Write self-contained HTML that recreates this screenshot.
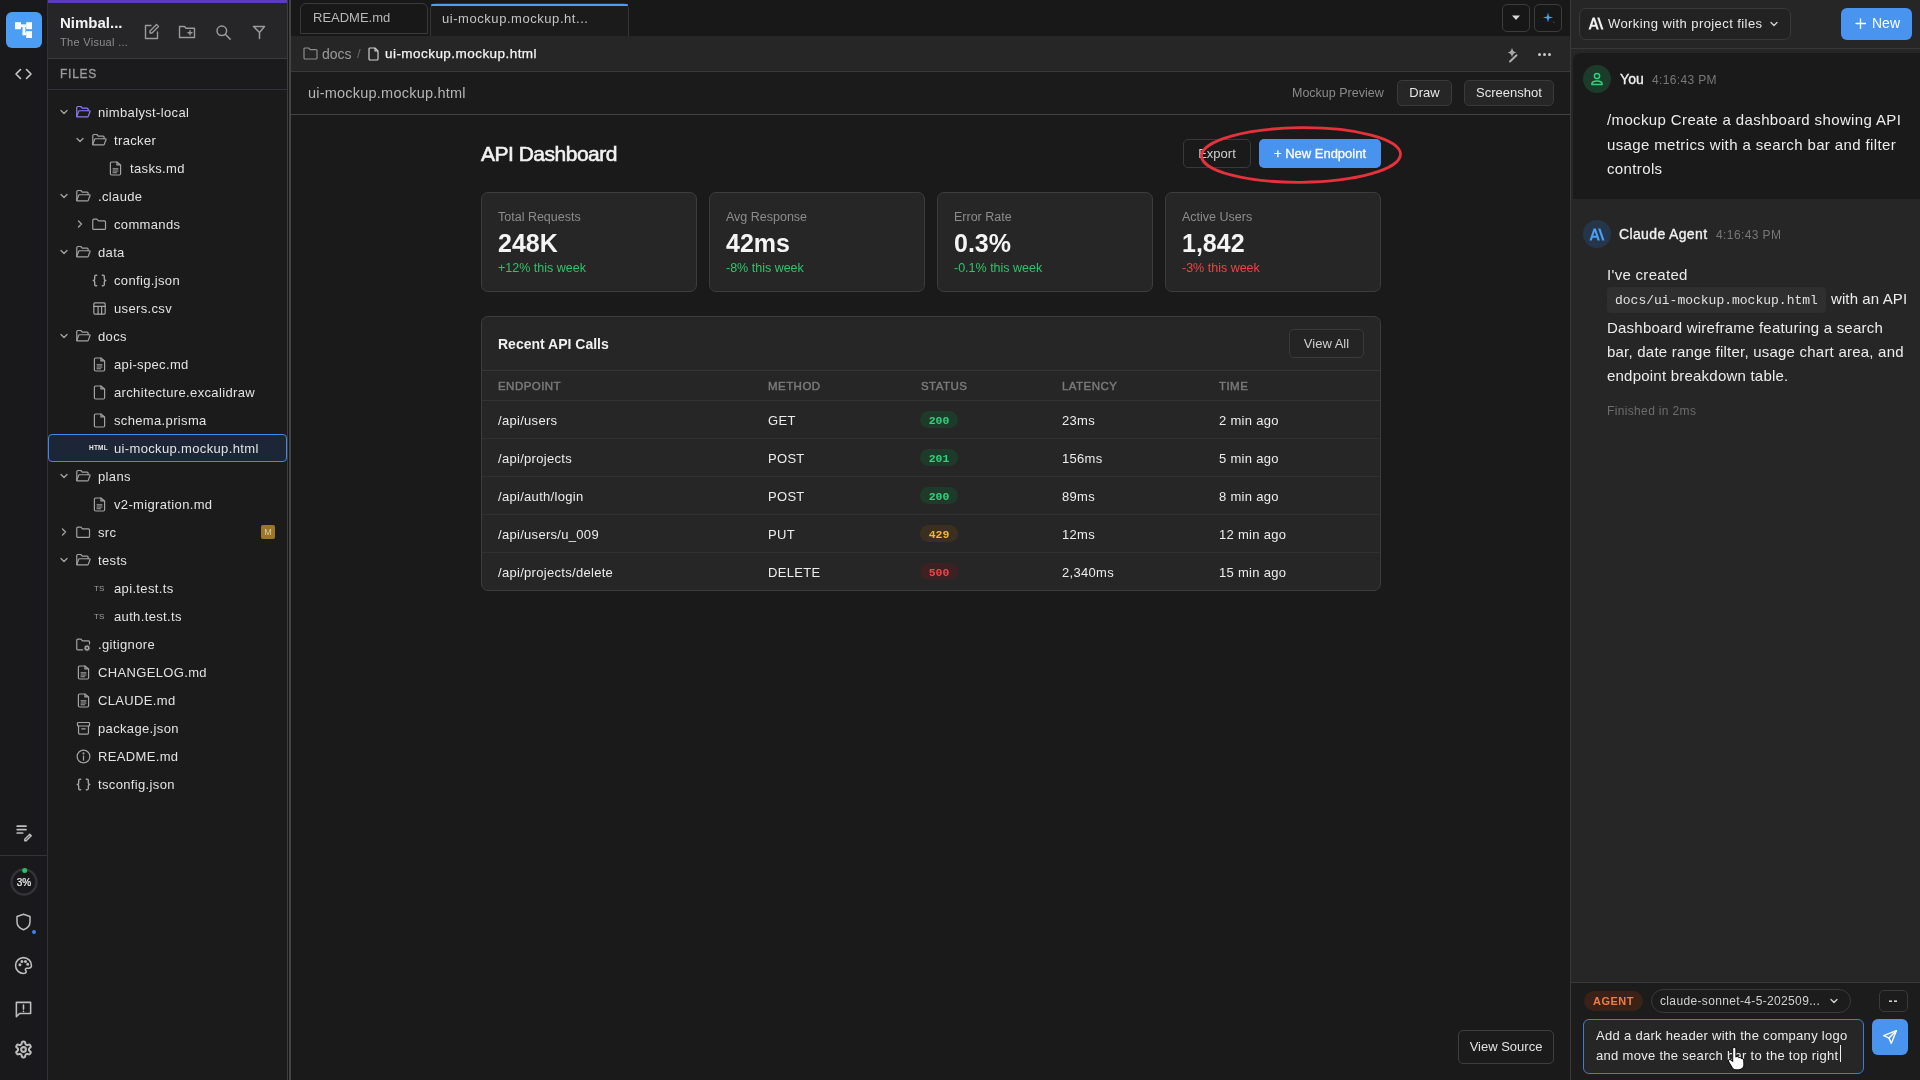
<!DOCTYPE html>
<html><head><meta charset="utf-8">
<style>
*{box-sizing:border-box;margin:0;padding:0}
html,body{width:1920px;height:1080px;overflow:hidden;background:#1a1a1a;font-family:"Liberation Sans",sans-serif;color:#e6e6e6}
.a{position:absolute}
body{will-change:transform}
svg{display:block}
#rail{left:0;top:0;width:47px;height:1080px;background:#19181a}
#railb{left:47px;top:0;width:1px;height:1080px;background:#333236}
#side{left:48px;top:0;width:239px;height:1080px;background:#1b1b1c}
#sideb{left:287px;top:0;width:1px;height:1080px;background:#3d3d40}
#sidehdr{left:48px;top:0;width:239px;height:59px;background:#262528;border-bottom:1px solid #3a393c}
#purp{left:48px;top:0;width:239px;height:3px;background:#5b3bc2}
#files{left:48px;top:59px;width:239px;height:31px;background:#1b1a1d;border-bottom:1px solid #333236}
.ftxt{font-size:13px;line-height:28px;color:#e2e2e2;white-space:nowrap;letter-spacing:0.35px}
.sel{background:#1d2636;border:1.5px solid #3d8be8;border-radius:4px}
.mbadge{width:14px;height:14px;background:#9c7628;color:#d8cba8;font-size:9px;line-height:14px;text-align:center;border-radius:2px}
#gap{left:288px;top:0;width:1px;height:1080px;background:#171717}
#gapl{left:289px;top:0;width:2px;height:1080px;background:#444446}
#main{left:291px;top:0;width:1279px;height:1080px;background:#1a1a1a}
#mainb{left:1570px;top:0;width:1px;height:1080px;background:#3a3a3a}
#right{left:1571px;top:0;width:349px;height:1080px;background:#262626}
.btn{background:#262626;border:1px solid #3a3a3a;border-radius:5px;color:#e6e6e6;text-align:center}
.card{background:#262626;border:1px solid #3c3c3c;border-radius:7px}
.tc{font-size:13px;color:#ececec;letter-spacing:0.3px}
.msg{font-size:15px;line-height:24.5px;color:#ececec;letter-spacing:0.3px}
</style></head><body>
<div class="a" id="rail"></div>
<div class="a" id="railb"></div>
<div class="a" id="side"></div><div class="a" id="sideb"></div>
<div class="a" id="sidehdr"></div>
<div class="a" id="purp"></div>
<div class="a" id="files"></div>
<div class="a" style="left:60px;top:14px;font-size:15px;font-weight:bold;color:#f2f2f2">Nimbal...</div>
<div class="a" style="left:60px;top:36px;font-size:11px;letter-spacing:0.3px;color:#8c8c8c">The Visual ...</div>
<div class="a" style="left:60px;top:67px;font-size:12px;-webkit-text-stroke:0.35px #9a9a9a;letter-spacing:0.75px;color:#9a9a9a">FILES</div>
<div class="a" style="left:6px;top:12px;width:36px;height:36px;background:#4b9ef4;border-radius:6px"></div>
<svg class="a" style="left:0;top:0" width="47" height="50" viewBox="0 0 47 50"><rect x="15" y="22.2" width="6" height="7" fill="#fff"/><rect x="26.2" y="22.2" width="5.8" height="7" fill="#fff"/><rect x="26.2" y="31.2" width="5.8" height="6.8" fill="#fff"/><rect x="21" y="24.4" width="5.2" height="2.7" fill="#fff"/><rect x="22.6" y="27" width="2.8" height="8.2" fill="#fff"/><rect x="22.6" y="32.6" width="3.6" height="2.6" fill="#fff"/></svg>
<svg class="a" style="left:0;top:60px" width="47" height="25" viewBox="0 60 47 25" fill="none" stroke="#c8c8c8" stroke-width="1.6" stroke-linecap="round" stroke-linejoin="round"><path d="M20.5 69.5 16 74l4.5 4.5M26.5 69.5 31 74l-4.5 4.5"/></svg>
<svg class="a" style="left:15px;top:824px" width="18" height="18" viewBox="0 0 18 18" fill="none" stroke="#bdbdbd" stroke-width="1.7" stroke-linecap="round"><path d="M2.2 2.2h8.8M2.2 5.6h8.8M2.2 9h5.5"/><path d="M9.8 15.3l5-5 1.4 1.4-5 5H9.8z" stroke-width="1.5" stroke-linejoin="round"/></svg>
<div class="a" style="left:0;top:855px;width:47px;height:1px;background:#343336"></div>
<svg class="a" style="left:9px;top:867px" width="30" height="30" viewBox="0 0 30 30"><circle cx="15" cy="15" r="12.5" fill="none" stroke="#333236" stroke-width="2.5"/><circle cx="15.7" cy="3.4" r="2.5" fill="#22c55e"/></svg>
<div class="a" style="left:9px;top:877px;width:30px;text-align:center;font-size:10px;color:#f0f0f0;-webkit-text-stroke:0.2px #f0f0f0">3%</div>
<svg class="a" style="left:15px;top:913px" width="17" height="18" viewBox="0 0 17 18" fill="none" stroke="#bdbdbd" stroke-width="1.5" stroke-linejoin="round"><path d="M8.5 1.2 2 3.5v5.3c0 4 2.9 6.8 6.5 8 3.6-1.2 6.5-4 6.5-8V3.5z"/></svg>
<div class="a" style="left:32px;top:930px;width:4px;height:4px;border-radius:50%;background:#3b82f6"></div>
<svg class="a" style="left:14px;top:956px" width="19" height="19" viewBox="0 0 24 24" fill="none" stroke="#bdbdbd" stroke-width="2" stroke-linecap="round" stroke-linejoin="round"><path d="M12 22a10 10 0 1 1 10-10c0 2.2-1.8 3.4-3.6 3.4h-2.2a1.8 1.8 0 0 0-1.4 3c.4.5.6 1 .6 1.5 0 1.2-1.2 2.1-3.4 2.1z"/><circle cx="7.5" cy="11" r=".9" fill="#bdbdbd"/><circle cx="10" cy="6.8" r=".9" fill="#bdbdbd"/><circle cx="14.5" cy="6.8" r=".9" fill="#bdbdbd"/><circle cx="17.3" cy="10.5" r=".9" fill="#bdbdbd"/></svg>
<svg class="a" style="left:14px;top:1000px" width="19" height="19" viewBox="0 0 24 24" fill="none" stroke="#bdbdbd" stroke-width="2" stroke-linecap="round" stroke-linejoin="round"><path d="M3 3h18v14H7l-4 4z"/><path d="M12 6.5v5M12 14.2v.3"/></svg>
<svg class="a" style="left:14px;top:1040px" width="19" height="19" viewBox="0 0 24 24" fill="none" stroke="#bdbdbd" stroke-width="2.6" stroke-linecap="round" stroke-linejoin="round"><path d="M12.22 2h-.44a2 2 0 0 0-2 2v.18a2 2 0 0 1-1 1.73l-.43.25a2 2 0 0 1-2 0l-.15-.08a2 2 0 0 0-2.73.73l-.22.38a2 2 0 0 0 .73 2.73l.15.1a2 2 0 0 1 1 1.72v.51a2 2 0 0 1-1 1.74l-.15.09a2 2 0 0 0-.73 2.73l.22.38a2 2 0 0 0 2.73.73l.15-.08a2 2 0 0 1 2 0l.43.25a2 2 0 0 1 1 1.73V20a2 2 0 0 0 2 2h.44a2 2 0 0 0 2-2v-.18a2 2 0 0 1 1-1.73l.43-.25a2 2 0 0 1 2 0l.15.08a2 2 0 0 0 2.73-.73l.22-.39a2 2 0 0 0-.73-2.73l-.15-.08a2 2 0 0 1-1-1.74v-.5a2 2 0 0 1 1-1.74l.15-.09a2 2 0 0 0 .73-2.73l-.22-.38a2 2 0 0 0-2.73-.73l-.15.08a2 2 0 0 1-2 0l-.43-.25a2 2 0 0 1-1-1.73V4a2 2 0 0 0-2-2z"/><circle cx="12" cy="12" r="3"/></svg>
<svg class="a" style="left:143px;top:23px" width="17" height="17" viewBox="0 0 17 17" fill="none" stroke="#9a9a9a" stroke-width="1.4" stroke-linecap="round" stroke-linejoin="round"><path d="M8 2.5H2.5v13h12V9"/><path d="M13.5 1.5l2 2L9 10H7V8z"/></svg>
<svg class="a" style="left:178px;top:24px" width="18" height="16" viewBox="0 0 18 16" fill="none" stroke="#9a9a9a" stroke-width="1.4" stroke-linejoin="round"><path d="M1.5 2.5h5l1.5 1.7h8.5v9.3h-15z"/><path d="M10 8.8h4M12 6.8v4" stroke-linecap="round"/></svg>
<svg class="a" style="left:215px;top:24px" width="17" height="17" viewBox="0 0 17 17" fill="none" stroke="#9a9a9a" stroke-width="1.5" stroke-linecap="round"><circle cx="6.8" cy="6.8" r="4.8"/><path d="M10.3 10.3l4.8 4.8"/></svg>
<svg class="a" style="left:252px;top:25px" width="14" height="15" viewBox="0 0 14 15" fill="none" stroke="#9a9a9a" stroke-width="1.5" stroke-linecap="round" stroke-linejoin="round"><path d="M1.5 1.5h11L7.5 7.5v6M7 7 1.5 1.5"/></svg>
<svg class="a" style="left:59px;top:107px" width="10" height="10" viewBox="0 0 10 10" fill="none" stroke="#a0a0a0" stroke-width="1.4" stroke-linecap="round" stroke-linejoin="round"><path d="M2 3.5 5 6.5 8 3.5"/></svg><svg class="a" style="left:74.5px;top:104px" width="17" height="17" viewBox="0 0 24 24" fill="none" stroke="#8b7cf6" stroke-width="1.7" stroke-linecap="round" stroke-linejoin="round"><path d="M2.5 17.5V5a1.5 1.5 0 0 1 1.5-1.5h4.2l2 2.2H17a1.5 1.5 0 0 1 1.5 1.5v2.3"/><path d="M2.5 17.5 5.2 10.3A1.2 1.2 0 0 1 6.3 9.5h14.2a.8.8 0 0 1 .75 1.05L18.7 17.5a1.2 1.2 0 0 1-1.1.8H3.3a.8.8 0 0 1-.8-.8z"/></svg><div class="a ftxt" style="left:98px;top:99px">nimbalyst-local</div>
<svg class="a" style="left:75px;top:135px" width="10" height="10" viewBox="0 0 10 10" fill="none" stroke="#a0a0a0" stroke-width="1.4" stroke-linecap="round" stroke-linejoin="round"><path d="M2 3.5 5 6.5 8 3.5"/></svg><svg class="a" style="left:90.5px;top:132px" width="17" height="17" viewBox="0 0 24 24" fill="none" stroke="#a3a3a3" stroke-width="1.7" stroke-linecap="round" stroke-linejoin="round"><path d="M2.5 17.5V5a1.5 1.5 0 0 1 1.5-1.5h4.2l2 2.2H17a1.5 1.5 0 0 1 1.5 1.5v2.3"/><path d="M2.5 17.5 5.2 10.3A1.2 1.2 0 0 1 6.3 9.5h14.2a.8.8 0 0 1 .75 1.05L18.7 17.5a1.2 1.2 0 0 1-1.1.8H3.3a.8.8 0 0 1-.8-.8z"/></svg><div class="a ftxt" style="left:114px;top:127px">tracker</div>
<svg class="a" style="left:106.5px;top:160px" width="17" height="17" viewBox="0 0 24 24" fill="none" stroke="#a3a3a3" stroke-width="1.7" stroke-linecap="round" stroke-linejoin="round"><path d="M14 2.8H6.5A1.7 1.7 0 0 0 4.8 4.5v15a1.7 1.7 0 0 0 1.7 1.7h11a1.7 1.7 0 0 0 1.7-1.7V7z"/><path d="M14 2.8V7h4.2"/><path d="M8.5 12.5h7M8.5 15.5h7M8.5 18h5"/></svg><div class="a ftxt" style="left:130px;top:155px">tasks.md</div>
<svg class="a" style="left:59px;top:191px" width="10" height="10" viewBox="0 0 10 10" fill="none" stroke="#a0a0a0" stroke-width="1.4" stroke-linecap="round" stroke-linejoin="round"><path d="M2 3.5 5 6.5 8 3.5"/></svg><svg class="a" style="left:74.5px;top:188px" width="17" height="17" viewBox="0 0 24 24" fill="none" stroke="#a3a3a3" stroke-width="1.7" stroke-linecap="round" stroke-linejoin="round"><path d="M2.5 17.5V5a1.5 1.5 0 0 1 1.5-1.5h4.2l2 2.2H17a1.5 1.5 0 0 1 1.5 1.5v2.3"/><path d="M2.5 17.5 5.2 10.3A1.2 1.2 0 0 1 6.3 9.5h14.2a.8.8 0 0 1 .75 1.05L18.7 17.5a1.2 1.2 0 0 1-1.1.8H3.3a.8.8 0 0 1-.8-.8z"/></svg><div class="a ftxt" style="left:98px;top:183px">.claude</div>
<svg class="a" style="left:75px;top:219px" width="10" height="10" viewBox="0 0 10 10" fill="none" stroke="#a0a0a0" stroke-width="1.4" stroke-linecap="round" stroke-linejoin="round"><path d="M3.5 2 6.5 5 3.5 8"/></svg><svg class="a" style="left:90.5px;top:216px" width="17" height="17" viewBox="0 0 24 24" fill="none" stroke="#a3a3a3" stroke-width="1.7" stroke-linecap="round" stroke-linejoin="round"><path d="M2.5 6a1.5 1.5 0 0 1 1.5-1.5h4.4l2.2 2.3H19a1.5 1.5 0 0 1 1.5 1.5v9.2a1.5 1.5 0 0 1-1.5 1.5H4a1.5 1.5 0 0 1-1.5-1.5z"/></svg><div class="a ftxt" style="left:114px;top:211px">commands</div>
<svg class="a" style="left:59px;top:247px" width="10" height="10" viewBox="0 0 10 10" fill="none" stroke="#a0a0a0" stroke-width="1.4" stroke-linecap="round" stroke-linejoin="round"><path d="M2 3.5 5 6.5 8 3.5"/></svg><svg class="a" style="left:74.5px;top:244px" width="17" height="17" viewBox="0 0 24 24" fill="none" stroke="#a3a3a3" stroke-width="1.7" stroke-linecap="round" stroke-linejoin="round"><path d="M2.5 17.5V5a1.5 1.5 0 0 1 1.5-1.5h4.2l2 2.2H17a1.5 1.5 0 0 1 1.5 1.5v2.3"/><path d="M2.5 17.5 5.2 10.3A1.2 1.2 0 0 1 6.3 9.5h14.2a.8.8 0 0 1 .75 1.05L18.7 17.5a1.2 1.2 0 0 1-1.1.8H3.3a.8.8 0 0 1-.8-.8z"/></svg><div class="a ftxt" style="left:98px;top:239px">data</div>
<svg class="a" style="left:90.5px;top:272px" width="17" height="17" viewBox="0 0 24 24" fill="none" stroke="#a3a3a3" stroke-width="1.7" stroke-linecap="round" stroke-linejoin="round"><path d="M8 4.5H7A1.8 1.8 0 0 0 5.2 6.3V10A2 2 0 0 1 3.2 12 2 2 0 0 1 5.2 14v3.7A1.8 1.8 0 0 0 7 19.5h1" stroke-width="2"/><path d="M16 4.5h1a1.8 1.8 0 0 1 1.8 1.8V10a2 2 0 0 0 2 2 2 2 0 0 0-2 2v3.7a1.8 1.8 0 0 1-1.8 1.8h-1" stroke-width="2"/></svg><div class="a ftxt" style="left:114px;top:267px">config.json</div>
<svg class="a" style="left:90.5px;top:300px" width="17" height="17" viewBox="0 0 24 24" fill="none" stroke="#a3a3a3" stroke-width="1.7" stroke-linecap="round" stroke-linejoin="round"><rect x="4" y="4" width="16" height="16" rx="1.5"/><path d="M4 9h16M10 9v11M15 9v11"/></svg><div class="a ftxt" style="left:114px;top:295px">users.csv</div>
<svg class="a" style="left:59px;top:331px" width="10" height="10" viewBox="0 0 10 10" fill="none" stroke="#a0a0a0" stroke-width="1.4" stroke-linecap="round" stroke-linejoin="round"><path d="M2 3.5 5 6.5 8 3.5"/></svg><svg class="a" style="left:74.5px;top:328px" width="17" height="17" viewBox="0 0 24 24" fill="none" stroke="#a3a3a3" stroke-width="1.7" stroke-linecap="round" stroke-linejoin="round"><path d="M2.5 17.5V5a1.5 1.5 0 0 1 1.5-1.5h4.2l2 2.2H17a1.5 1.5 0 0 1 1.5 1.5v2.3"/><path d="M2.5 17.5 5.2 10.3A1.2 1.2 0 0 1 6.3 9.5h14.2a.8.8 0 0 1 .75 1.05L18.7 17.5a1.2 1.2 0 0 1-1.1.8H3.3a.8.8 0 0 1-.8-.8z"/></svg><div class="a ftxt" style="left:98px;top:323px">docs</div>
<svg class="a" style="left:90.5px;top:356px" width="17" height="17" viewBox="0 0 24 24" fill="none" stroke="#a3a3a3" stroke-width="1.7" stroke-linecap="round" stroke-linejoin="round"><path d="M14 2.8H6.5A1.7 1.7 0 0 0 4.8 4.5v15a1.7 1.7 0 0 0 1.7 1.7h11a1.7 1.7 0 0 0 1.7-1.7V7z"/><path d="M14 2.8V7h4.2"/><path d="M8.5 12.5h7M8.5 15.5h7M8.5 18h5"/></svg><div class="a ftxt" style="left:114px;top:351px">api-spec.md</div>
<svg class="a" style="left:90.5px;top:384px" width="17" height="17" viewBox="0 0 24 24" fill="none" stroke="#a3a3a3" stroke-width="1.7" stroke-linecap="round" stroke-linejoin="round"><path d="M14 2.8H6.5A1.7 1.7 0 0 0 4.8 4.5v15a1.7 1.7 0 0 0 1.7 1.7h11a1.7 1.7 0 0 0 1.7-1.7V7z"/><path d="M14 2.8V7h4.2"/></svg><div class="a ftxt" style="left:114px;top:379px">architecture.excalidraw</div>
<svg class="a" style="left:90.5px;top:412px" width="17" height="17" viewBox="0 0 24 24" fill="none" stroke="#a3a3a3" stroke-width="1.7" stroke-linecap="round" stroke-linejoin="round"><path d="M14 2.8H6.5A1.7 1.7 0 0 0 4.8 4.5v15a1.7 1.7 0 0 0 1.7 1.7h11a1.7 1.7 0 0 0 1.7-1.7V7z"/><path d="M14 2.8V7h4.2"/></svg><div class="a ftxt" style="left:114px;top:407px">schema.prisma</div>
<div class="a sel" style="left:48px;top:434px;width:239px;height:28px"></div><div class="a ico-txt" style="left:89px;top:444px;font-size:6.5px;font-weight:bold;letter-spacing:0.2px;color:#e8e8e8">HTML</div><div class="a ftxt" style="left:114px;top:435px">ui-mockup.mockup.html</div>
<svg class="a" style="left:59px;top:471px" width="10" height="10" viewBox="0 0 10 10" fill="none" stroke="#a0a0a0" stroke-width="1.4" stroke-linecap="round" stroke-linejoin="round"><path d="M2 3.5 5 6.5 8 3.5"/></svg><svg class="a" style="left:74.5px;top:468px" width="17" height="17" viewBox="0 0 24 24" fill="none" stroke="#a3a3a3" stroke-width="1.7" stroke-linecap="round" stroke-linejoin="round"><path d="M2.5 17.5V5a1.5 1.5 0 0 1 1.5-1.5h4.2l2 2.2H17a1.5 1.5 0 0 1 1.5 1.5v2.3"/><path d="M2.5 17.5 5.2 10.3A1.2 1.2 0 0 1 6.3 9.5h14.2a.8.8 0 0 1 .75 1.05L18.7 17.5a1.2 1.2 0 0 1-1.1.8H3.3a.8.8 0 0 1-.8-.8z"/></svg><div class="a ftxt" style="left:98px;top:463px">plans</div>
<svg class="a" style="left:90.5px;top:496px" width="17" height="17" viewBox="0 0 24 24" fill="none" stroke="#a3a3a3" stroke-width="1.7" stroke-linecap="round" stroke-linejoin="round"><path d="M14 2.8H6.5A1.7 1.7 0 0 0 4.8 4.5v15a1.7 1.7 0 0 0 1.7 1.7h11a1.7 1.7 0 0 0 1.7-1.7V7z"/><path d="M14 2.8V7h4.2"/><path d="M8.5 12.5h7M8.5 15.5h7M8.5 18h5"/></svg><div class="a ftxt" style="left:114px;top:491px">v2-migration.md</div>
<svg class="a" style="left:59px;top:527px" width="10" height="10" viewBox="0 0 10 10" fill="none" stroke="#a0a0a0" stroke-width="1.4" stroke-linecap="round" stroke-linejoin="round"><path d="M3.5 2 6.5 5 3.5 8"/></svg><svg class="a" style="left:74.5px;top:524px" width="17" height="17" viewBox="0 0 24 24" fill="none" stroke="#a3a3a3" stroke-width="1.7" stroke-linecap="round" stroke-linejoin="round"><path d="M2.5 6a1.5 1.5 0 0 1 1.5-1.5h4.4l2.2 2.3H19a1.5 1.5 0 0 1 1.5 1.5v9.2a1.5 1.5 0 0 1-1.5 1.5H4a1.5 1.5 0 0 1-1.5-1.5z"/></svg><div class="a ftxt" style="left:98px;top:519px">src</div><div class="a mbadge" style="left:261px;top:525px">M</div>
<svg class="a" style="left:59px;top:555px" width="10" height="10" viewBox="0 0 10 10" fill="none" stroke="#a0a0a0" stroke-width="1.4" stroke-linecap="round" stroke-linejoin="round"><path d="M2 3.5 5 6.5 8 3.5"/></svg><svg class="a" style="left:74.5px;top:552px" width="17" height="17" viewBox="0 0 24 24" fill="none" stroke="#a3a3a3" stroke-width="1.7" stroke-linecap="round" stroke-linejoin="round"><path d="M2.5 17.5V5a1.5 1.5 0 0 1 1.5-1.5h4.2l2 2.2H17a1.5 1.5 0 0 1 1.5 1.5v2.3"/><path d="M2.5 17.5 5.2 10.3A1.2 1.2 0 0 1 6.3 9.5h14.2a.8.8 0 0 1 .75 1.05L18.7 17.5a1.2 1.2 0 0 1-1.1.8H3.3a.8.8 0 0 1-.8-.8z"/></svg><div class="a ftxt" style="left:98px;top:547px">tests</div>
<div class="a ico-txt" style="left:94px;top:584px;font-size:8px;color:#a0a0a0">TS</div><div class="a ftxt" style="left:114px;top:575px">api.test.ts</div>
<div class="a ico-txt" style="left:94px;top:612px;font-size:8px;color:#a0a0a0">TS</div><div class="a ftxt" style="left:114px;top:603px">auth.test.ts</div>
<svg class="a" style="left:74.5px;top:636px" width="17" height="17" viewBox="0 0 24 24" fill="none" stroke="#a3a3a3" stroke-width="1.7" stroke-linecap="round" stroke-linejoin="round"><path d="M11 19.5H4a1.5 1.5 0 0 1-1.5-1.5V6A1.5 1.5 0 0 1 4 4.5h4.4l2.2 2.3H19a1.5 1.5 0 0 1 1.5 1.5v3"/><circle cx="17" cy="17" r="2.2"/><path d="M17 13.3v1.3M17 19.4v1.3M13.3 17h1.3M19.4 17h1.3M14.4 14.4l.9.9M18.7 18.7l.9.9M14.4 19.6l.9-.9M18.7 15.3l.9-.9"/></svg><div class="a ftxt" style="left:98px;top:631px">.gitignore</div>
<svg class="a" style="left:74.5px;top:664px" width="17" height="17" viewBox="0 0 24 24" fill="none" stroke="#a3a3a3" stroke-width="1.7" stroke-linecap="round" stroke-linejoin="round"><path d="M14 2.8H6.5A1.7 1.7 0 0 0 4.8 4.5v15a1.7 1.7 0 0 0 1.7 1.7h11a1.7 1.7 0 0 0 1.7-1.7V7z"/><path d="M14 2.8V7h4.2"/><path d="M8.5 12.5h7M8.5 15.5h7M8.5 18h5"/></svg><div class="a ftxt" style="left:98px;top:659px">CHANGELOG.md</div>
<svg class="a" style="left:74.5px;top:692px" width="17" height="17" viewBox="0 0 24 24" fill="none" stroke="#a3a3a3" stroke-width="1.7" stroke-linecap="round" stroke-linejoin="round"><path d="M14 2.8H6.5A1.7 1.7 0 0 0 4.8 4.5v15a1.7 1.7 0 0 0 1.7 1.7h11a1.7 1.7 0 0 0 1.7-1.7V7z"/><path d="M14 2.8V7h4.2"/><path d="M8.5 12.5h7M8.5 15.5h7M8.5 18h5"/></svg><div class="a ftxt" style="left:98px;top:687px">CLAUDE.md</div>
<svg class="a" style="left:74.5px;top:720px" width="17" height="17" viewBox="0 0 24 24" fill="none" stroke="#a3a3a3" stroke-width="1.7" stroke-linecap="round" stroke-linejoin="round"><rect x="3.5" y="3.5" width="17" height="5" rx="1"/><path d="M5 8.5v10a1.5 1.5 0 0 0 1.5 1.5h11a1.5 1.5 0 0 0 1.5-1.5v-10"/><path d="M9.5 12.5h5"/></svg><div class="a ftxt" style="left:98px;top:715px">package.json</div>
<svg class="a" style="left:74.5px;top:748px" width="17" height="17" viewBox="0 0 24 24" fill="none" stroke="#a3a3a3" stroke-width="1.7" stroke-linecap="round" stroke-linejoin="round"><circle cx="12" cy="12" r="9"/><path d="M12 11v6"/><circle cx="12" cy="7.6" r=".6" fill="currentColor"/></svg><div class="a ftxt" style="left:98px;top:743px">README.md</div>
<svg class="a" style="left:74.5px;top:776px" width="17" height="17" viewBox="0 0 24 24" fill="none" stroke="#a3a3a3" stroke-width="1.7" stroke-linecap="round" stroke-linejoin="round"><path d="M8 4.5H7A1.8 1.8 0 0 0 5.2 6.3V10A2 2 0 0 1 3.2 12 2 2 0 0 1 5.2 14v3.7A1.8 1.8 0 0 0 7 19.5h1" stroke-width="2"/><path d="M16 4.5h1a1.8 1.8 0 0 1 1.8 1.8V10a2 2 0 0 0 2 2 2 2 0 0 0-2 2v3.7a1.8 1.8 0 0 1-1.8 1.8h-1" stroke-width="2"/></svg><div class="a ftxt" style="left:98px;top:771px">tsconfig.json</div>
<div class="a" id="gap"></div>
<div class="a" id="gapl"></div>
<div class="a" id="main"></div>
<div class="a" style="left:291px;top:0;width:1279px;height:36px;background:#181818"></div>
<div class="a" style="left:300px;top:3px;width:128px;height:31px;border:1px solid #3a3a3a;border-radius:6px 6px 0 0;background:#181818"></div>
<div class="a" style="left:313px;top:9.5px;font-size:13px;color:#b8b8b8">README.md</div>
<div class="a" style="left:430px;top:3px;width:199px;height:34px;border:1px solid #343434;border-bottom:none;border-radius:6px 6px 0 0;background:#1b1b1b"></div>
<div class="a" style="left:431px;top:4px;width:197px;height:2px;background:#4a9ff5;border-radius:1px"></div>
<div class="a" style="left:442px;top:11px;font-size:13px;color:#c4c4c4;letter-spacing:0.55px">ui-mockup.mockup.ht...</div>
<div class="a" style="left:1502px;top:4px;width:28px;height:28px;border:1px solid #3c3c3c;border-radius:5px;background:#171717"></div>
<svg class="a" style="left:1511px;top:14px" width="10" height="7" viewBox="0 0 10 7"><path d="M1 1.5h8L5 6z" fill="#d8d8d8"/></svg>
<div class="a" style="left:1534px;top:4px;width:28px;height:28px;border:1px solid #3c3c3c;border-radius:5px;background:#171717"></div>
<svg class="a" style="left:1541px;top:10px" width="15" height="15" viewBox="0 0 15 15"><path d="M7 2.5 8 6.5 12 7.5 8 8.5 7 12.5 6 8.5 2 7.5 6 6.5z" fill="#4aa3ff"/><path d="M12 10.5l.5 1.2 1.2.5-1.2.5" fill="#777"/></svg>
<div class="a" style="left:291px;top:36px;width:1279px;height:36px;background:#262626;border-bottom:1px solid #3a3a3a"></div>
<svg class="a" style="left:303px;top:47px" width="15" height="13" viewBox="0 0 15 13" fill="none" stroke="#8c8c8c" stroke-width="1.2" stroke-linejoin="round"><path d="M1 2a1 1 0 0 1 1-1h3.6l1.5 1.6H13a1 1 0 0 1 1 1V11a1 1 0 0 1-1 1H2a1 1 0 0 1-1-1z"/></svg>
<div class="a" style="left:322px;top:46px;font-size:14px;color:#9a9a9a">docs</div>
<div class="a" style="left:357px;top:46px;font-size:13px;color:#6a6a6a">/</div>
<svg class="a" style="left:367px;top:47px" width="13" height="14" viewBox="0 0 13 14" fill="none" stroke="#cfcfcf" stroke-width="1.2" stroke-linejoin="round"><path d="M8 1H3a1 1 0 0 0-1 1v10a1 1 0 0 0 1 1h7a1 1 0 0 0 1-1V4z"/><path d="M8 1v3h3"/></svg>
<div class="a" style="left:385px;top:45.5px;font-size:13.5px;letter-spacing:0.45px;color:#f4f4f4;-webkit-text-stroke:0.25px #f4f4f4">ui-mockup.mockup.html</div>
<svg class="a" style="left:1500px;top:44px" width="24" height="22" viewBox="1500 44 24 22"><path d="M1512 47.5Q1512.6 51.9 1516.5 52.6 1512.6 53.3 1512 57.5 1511.4 53.3 1507.5 52.6 1511.4 51.9 1512 47.5z" fill="#a8a8a8"/><path d="M1510 61.5 1516.5 55.2" stroke="#b0b0b0" stroke-width="1.9" stroke-linecap="round"/></svg>
<div class="a" style="left:1538px;top:52.5px;width:3px;height:3px;border-radius:50%;background:#c8c8c8"></div>
<div class="a" style="left:1543px;top:52.5px;width:3px;height:3px;border-radius:50%;background:#c8c8c8"></div>
<div class="a" style="left:1548px;top:52.5px;width:3px;height:3px;border-radius:50%;background:#c8c8c8"></div>
<div class="a" style="left:291px;top:72px;width:1279px;height:43px;background:#1b1b1b;border-bottom:1px solid #434343"></div>
<div class="a" style="left:308px;top:85px;font-size:14.5px;letter-spacing:0.22px;color:#b5b5b5">ui-mockup.mockup.html</div>
<div class="a" style="left:1292px;top:86px;font-size:12.5px;color:#8a8a8a">Mockup Preview</div>
<div class="a btn" style="left:1397px;top:80px;width:55px;height:26px;font-size:13px;line-height:24px">Draw</div>
<div class="a btn" style="left:1464px;top:80px;width:90px;height:26px;font-size:13px;line-height:24px">Screenshot</div>
<div class="a" style="left:481px;top:142px;font-size:21px;-webkit-text-stroke:0.6px #f2f2f2;letter-spacing:-0.5px;color:#f2f2f2">API Dashboard</div>
<div class="a" style="left:1183px;top:139px;width:68px;height:29px;border:1px solid #3a3a3a;border-radius:5px;color:#cfcfcf;font-size:13px;line-height:27px;text-align:center">Export</div>
<div class="a" style="left:1259px;top:139px;width:122px;height:29px;background:#4893ee;border-radius:5px;color:#fff;font-size:13px;line-height:29px;-webkit-text-stroke:0.3px #fff;text-align:center">+ New Endpoint</div>
<svg class="a" style="left:1195px;top:122px" width="212" height="66" viewBox="0 0 212 66"><ellipse cx="106" cy="33" rx="99.5" ry="27.3" fill="none" stroke="#e5323c" stroke-width="2.8" transform="rotate(-0.5 106 33)"/></svg>
<div class="a card" style="left:481px;top:192px;width:216px;height:100px"></div>
<div class="a" style="left:498px;top:210px;font-size:12.5px;color:#8c8c8c">Total Requests</div>
<div class="a" style="left:498px;top:229px;font-size:25px;font-weight:bold;color:#f4f4f4">248K</div>
<div class="a" style="left:498px;top:261px;font-size:12.5px;color:#2fc46b">+12% this week</div>
<div class="a card" style="left:709px;top:192px;width:216px;height:100px"></div>
<div class="a" style="left:726px;top:210px;font-size:12.5px;color:#8c8c8c">Avg Response</div>
<div class="a" style="left:726px;top:229px;font-size:25px;font-weight:bold;color:#f4f4f4">42ms</div>
<div class="a" style="left:726px;top:261px;font-size:12.5px;color:#2fc46b">-8% this week</div>
<div class="a card" style="left:937px;top:192px;width:216px;height:100px"></div>
<div class="a" style="left:954px;top:210px;font-size:12.5px;color:#8c8c8c">Error Rate</div>
<div class="a" style="left:954px;top:229px;font-size:25px;font-weight:bold;color:#f4f4f4">0.3%</div>
<div class="a" style="left:954px;top:261px;font-size:12.5px;color:#2fc46b">-0.1% this week</div>
<div class="a card" style="left:1165px;top:192px;width:216px;height:100px"></div>
<div class="a" style="left:1182px;top:210px;font-size:12.5px;color:#8c8c8c">Active Users</div>
<div class="a" style="left:1182px;top:229px;font-size:25px;font-weight:bold;color:#f4f4f4">1,842</div>
<div class="a" style="left:1182px;top:261px;font-size:12.5px;color:#ef4444">-3% this week</div>
<div class="a card" style="left:481px;top:316px;width:900px;height:275px"></div>
<div class="a" style="left:498px;top:336px;font-size:14px;font-weight:bold;color:#f0f0f0">Recent API Calls</div>
<div class="a" style="left:1289px;top:329px;width:75px;height:29px;border:1px solid #3a3a3a;border-radius:5px;color:#cfcfcf;font-size:13px;line-height:27px;text-align:center;background:#242424">View All</div>
<div class="a" style="left:482px;top:370px;width:898px;height:1px;background:#363636"></div>
<div class="a" style="left:498px;top:380px;font-size:11.5px;-webkit-text-stroke:0.45px #7a7a7a;letter-spacing:0.45px;color:#7a7a7a">ENDPOINT</div>
<div class="a" style="left:768px;top:380px;font-size:11.5px;-webkit-text-stroke:0.45px #7a7a7a;letter-spacing:0.45px;color:#7a7a7a">METHOD</div>
<div class="a" style="left:921px;top:380px;font-size:11.5px;-webkit-text-stroke:0.45px #7a7a7a;letter-spacing:0.45px;color:#7a7a7a">STATUS</div>
<div class="a" style="left:1062px;top:380px;font-size:11.5px;-webkit-text-stroke:0.45px #7a7a7a;letter-spacing:0.45px;color:#7a7a7a">LATENCY</div>
<div class="a" style="left:1219px;top:380px;font-size:11.5px;-webkit-text-stroke:0.45px #7a7a7a;letter-spacing:0.45px;color:#7a7a7a">TIME</div>
<div class="a" style="left:482px;top:400px;width:898px;height:1px;background:#333"></div>
<div class="a tc" style="left:498px;top:413px">/api/users</div>
<div class="a tc" style="left:768px;top:413px">GET</div>
<div class="a" style="left:920px;top:411px;width:38px;height:17px;border-radius:9px;background:#1e3a2a;color:#34d07a;font-family:'Liberation Mono',monospace;font-size:11.5px;font-weight:bold;line-height:19px;text-align:center">200</div>
<div class="a tc" style="left:1062px;top:413px">23ms</div>
<div class="a tc" style="left:1219px;top:413px">2 min ago</div>
<div class="a" style="left:482px;top:438px;width:898px;height:1px;background:#303030"></div>
<div class="a tc" style="left:498px;top:451px">/api/projects</div>
<div class="a tc" style="left:768px;top:451px">POST</div>
<div class="a" style="left:920px;top:449px;width:38px;height:17px;border-radius:9px;background:#1e3a2a;color:#34d07a;font-family:'Liberation Mono',monospace;font-size:11.5px;font-weight:bold;line-height:19px;text-align:center">201</div>
<div class="a tc" style="left:1062px;top:451px">156ms</div>
<div class="a tc" style="left:1219px;top:451px">5 min ago</div>
<div class="a" style="left:482px;top:476px;width:898px;height:1px;background:#303030"></div>
<div class="a tc" style="left:498px;top:489px">/api/auth/login</div>
<div class="a tc" style="left:768px;top:489px">POST</div>
<div class="a" style="left:920px;top:487px;width:38px;height:17px;border-radius:9px;background:#1e3a2a;color:#34d07a;font-family:'Liberation Mono',monospace;font-size:11.5px;font-weight:bold;line-height:19px;text-align:center">200</div>
<div class="a tc" style="left:1062px;top:489px">89ms</div>
<div class="a tc" style="left:1219px;top:489px">8 min ago</div>
<div class="a" style="left:482px;top:514px;width:898px;height:1px;background:#303030"></div>
<div class="a tc" style="left:498px;top:527px">/api/users/u_009</div>
<div class="a tc" style="left:768px;top:527px">PUT</div>
<div class="a" style="left:920px;top:525px;width:38px;height:17px;border-radius:9px;background:#3b3020;color:#f5b342;font-family:'Liberation Mono',monospace;font-size:11.5px;font-weight:bold;line-height:19px;text-align:center">429</div>
<div class="a tc" style="left:1062px;top:527px">12ms</div>
<div class="a tc" style="left:1219px;top:527px">12 min ago</div>
<div class="a" style="left:482px;top:552px;width:898px;height:1px;background:#303030"></div>
<div class="a tc" style="left:498px;top:565px">/api/projects/delete</div>
<div class="a tc" style="left:768px;top:565px">DELETE</div>
<div class="a" style="left:920px;top:563px;width:38px;height:17px;border-radius:9px;background:#3d2024;color:#ef4444;font-family:'Liberation Mono',monospace;font-size:11.5px;font-weight:bold;line-height:19px;text-align:center">500</div>
<div class="a tc" style="left:1062px;top:565px">2,340ms</div>
<div class="a tc" style="left:1219px;top:565px">15 min ago</div>
<div class="a" style="left:1458px;top:1030px;width:96px;height:34px;border:1px solid #3f3f3f;border-radius:5px;background:#1b1b1b;color:#e0e0e0;font-size:13px;line-height:32px;text-align:center">View Source</div>

<div class="a" id="mainb"></div>
<div class="a" id="right"></div>
<div class="a" style="left:1571px;top:48px;width:349px;height:1px;background:#383838"></div>
<div class="a" style="left:1579px;top:8px;width:212px;height:32px;border:1px solid #3a3a3a;border-radius:7px;background:#222"></div>
<svg class="a" style="left:1588px;top:17px" width="16" height="13" viewBox="0 0 16 13"><path d="M0.5 12.5 4.6 0.5h2.2l4.1 12h-2.3l-0.9-2.7H3.7l-0.9 2.7zM4.3 7.8h2.8L5.7 3.5z" fill="#f0f0f0"/><path d="M9.2 0.5h2.2l4.1 12h-2.3z" fill="#f0f0f0"/></svg>
<div class="a" style="left:1608px;top:16px;font-size:13px;letter-spacing:0.42px;color:#e8e8e8">Working with project files</div>
<svg class="a" style="left:1769px;top:19px" width="10" height="10" viewBox="0 0 10 10" fill="none" stroke="#d0d0d0" stroke-width="1.4" stroke-linecap="round" stroke-linejoin="round"><path d="M2 3.5 5 6.5 8 3.5"/></svg>
<div class="a" style="left:1841px;top:8px;width:71px;height:32px;background:#4894ef;border-radius:6px"></div>
<svg class="a" style="left:1855px;top:18px" width="11" height="11" viewBox="0 0 11 11" stroke="#fff" stroke-width="1.3" stroke-linecap="round"><path d="M5.5 1v9.5M1 5.5h9.5"/></svg>
<div class="a" style="left:1872px;top:15px;font-size:14px;color:#fff">New</div>
<div class="a" style="left:1573px;top:53px;width:347px;height:146px;background:#1a1a1a;border-radius:8px 0 0 0"></div>
<div class="a" style="left:1583px;top:65px;width:28px;height:28px;border-radius:50%;background:#1c3b2b"></div>
<svg class="a" style="left:1589px;top:71px" width="16" height="16" viewBox="0 0 16 16" fill="none" stroke="#2fd27a" stroke-width="1.5"><circle cx="8" cy="5" r="2.6"/><path d="M2.8 13.5c0-2.2 2.3-3.4 5.2-3.4s5.2 1.2 5.2 3.4z" stroke-linejoin="round"/></svg>
<div class="a" style="left:1620px;top:71px;font-size:14px;-webkit-text-stroke:0.35px #f0f0f0;letter-spacing:0.1px;color:#f0f0f0">You</div>
<div class="a" style="left:1652px;top:73px;font-size:12px;letter-spacing:0.35px;color:#777">4:16:43 PM</div>
<div class="a msg" style="left:1607px;top:108px;width:310px;letter-spacing:0.37px">/mockup Create a dashboard showing API usage metrics with a search bar and filter controls</div>
<div class="a" style="left:1583px;top:220px;width:28px;height:28px;border-radius:50%;background:#25364a"></div>
<svg class="a" style="left:1589px;top:228px" width="16" height="13" viewBox="0 0 16 13"><path d="M0.5 12.5 4.6 0.5h2.2l4.1 12h-2.3l-0.9-2.7H3.7l-0.9 2.7zM4.3 7.8h2.8L5.7 3.5z" fill="#4a9ff5"/><path d="M9.2 0.5h2.2l4.1 12h-2.3z" fill="#4a9ff5"/></svg>
<div class="a" style="left:1619px;top:226px;font-size:14px;-webkit-text-stroke:0.35px #f0f0f0;letter-spacing:0.36px;color:#f0f0f0">Claude Agent</div>
<div class="a" style="left:1716px;top:228px;font-size:12px;letter-spacing:0.4px;color:#777">4:16:43 PM</div>
<div class="a msg" style="left:1607px;top:262.5px">I've created</div>
<div class="a" style="left:1607px;top:287px;width:219px;height:26px;background:#2f2f2f;border-radius:4px"></div>
<div class="a" style="left:1615px;top:293px;font-family:'Liberation Mono',monospace;font-size:13px;color:#e0e0e0">docs/ui-mockup.mockup.html</div>
<div class="a msg" style="left:1831px;top:287px;letter-spacing:0.1px">with an API</div>
<div class="a msg" style="left:1607px;top:315.5px;width:320px;letter-spacing:0.22px;line-height:24px">Dashboard wireframe featuring a search<br>bar, date range filter, usage chart area, and<br>endpoint breakdown table.</div>
<div class="a" style="left:1607px;top:404px;font-size:12px;letter-spacing:0.35px;color:#6c6c6c">Finished in 2ms</div>
<div class="a" style="left:1571px;top:982px;width:349px;height:98px;background:#1c1c1c;border-top:1px solid #383838"></div>
<div class="a" style="left:1584px;top:991px;width:59px;height:20px;border-radius:10px;background:#3a2218;color:#f47c3c;font-size:11px;font-weight:bold;letter-spacing:0.5px;line-height:20px;text-align:center">AGENT</div>
<div class="a" style="left:1651px;top:989px;width:200px;height:24px;border:1px solid #3a3a3a;border-radius:12px"></div>
<div class="a" style="left:1660px;top:994px;font-size:12px;letter-spacing:0.35px;color:#d0d0d0">claude-sonnet-4-5-202509...</div>
<svg class="a" style="left:1829px;top:996px" width="10" height="10" viewBox="0 0 10 10" fill="none" stroke="#d0d0d0" stroke-width="1.4" stroke-linecap="round" stroke-linejoin="round"><path d="M2 3.5 5 6.5 8 3.5"/></svg>
<div class="a" style="left:1879px;top:990px;width:29px;height:22px;border:1px solid #3a3a3a;border-radius:5px;color:#d0d0d0;font-size:12px;font-weight:bold;letter-spacing:1px;line-height:21px;text-align:center">--</div>
<div class="a" style="left:1583px;top:1019px;width:281px;height:55px;border:1.5px solid #3b7fd4;border-radius:6px;background:#262626"></div>
<div class="a" style="left:1596px;top:1026px;font-size:13px;line-height:20px;letter-spacing:0.3px;color:#ebebeb;width:275px">Add a dark header with the company logo<br>and move the search bar to the top right</div>
<div class="a" style="left:1840px;top:1045px;width:1px;height:17px;background:#f0f0f0"></div>
<div class="a" style="left:1872px;top:1019px;width:36px;height:36px;background:#4894ef;border-radius:6px"></div>
<svg class="a" style="left:1882px;top:1029px" width="16" height="16" viewBox="0 0 24 24" fill="none" stroke="#fff" stroke-width="2.2" stroke-linejoin="round" stroke-linecap="round"><path d="M21.5 2.5 2.5 10l8 3.5 3.5 8z"/><path d="M21.5 2.5 10.5 13.5"/></svg>
<svg class="a" style="left:1726px;top:1046px" width="22" height="25" viewBox="0 0 20 23" style="transform:rotate(-8deg)"><path d="M6 2.5a1.5 1.5 0 0 1 3 0V10l1-.3a1.5 1.5 0 0 1 1.9 1l.3-.1a1.5 1.5 0 0 1 1.9 1 1.5 1.5 0 0 1 2 1.2l.3 4c.2 2.8-1.8 5.2-4.6 5.2H9c-1.5 0-2.6-.8-3.4-2L2.3 14.6a1.4 1.4 0 0 1 2-1.9L6 14z" fill="#fff" stroke="#111" stroke-width="1"/></svg>

</body></html>
